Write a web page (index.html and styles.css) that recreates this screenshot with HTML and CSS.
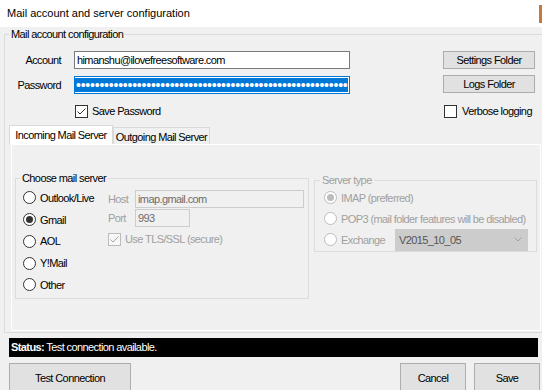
FILE: index.html
```html
<!DOCTYPE html>
<html>
<head>
<meta charset="utf-8">
<title>Mail account and server configuration</title>
<link rel="stylesheet" href="styles.css">
</head>
<body>
<div class="titlebar"><span class="title">Mail account and server configuration</span><span class="edge"></span></div>

<fieldset class="group outer">
  <legend>Mail account configuration</legend>
  <div class="top">
    <div class="form">
      <span class="lbl">Account</span>
      <div class="textbox">himanshu@ilovefreesoftware.com</div>
      <span class="lbl">Password</span>
      <div class="textbox focus"><span class="sel">••••••••••••••••••••••••••••••••••••••••••••••••••••••••••</span></div>
      <div class="check save">
        <svg width="13" height="13" viewBox="0 0 13 13"><rect x=".5" y=".5" width="12" height="12" fill="#fff" stroke="#333"/><path d="M2.5 6.5l2.5 2.5 5.5-5.5" fill="none" stroke="#333"/></svg>
        <span>Save Password</span>
      </div>
    </div>
    <div class="side">
      <button class="btn">Settings Folder</button>
      <button class="btn">Logs Folder</button>
      <div class="check verbose">
        <svg width="13" height="13" viewBox="0 0 13 13"><rect x=".5" y=".5" width="12" height="12" fill="#fff" stroke="#333"/></svg>
        <span>Verbose logging</span>
      </div>
    </div>
  </div>

  <div class="tabs">
    <div class="tabstrip">
      <div class="tab active">Incoming Mail Server</div>
      <div class="tab">Outgoing Mail Server</div>
    </div>
    <div class="panel">
      <fieldset class="group choose">
        <legend>Choose mail server</legend>
        <div class="choose-body">
          <div class="radios">
            <div class="radio-row"><span class="radio"></span><span>Outlook/Live</span></div>
            <div class="radio-row"><span class="radio on"></span><span>Gmail</span></div>
            <div class="radio-row"><span class="radio"></span><span>AOL</span></div>
            <div class="radio-row"><span class="radio"></span><span>Y!Mail</span></div>
            <div class="radio-row"><span class="radio"></span><span>Other</span></div>
          </div>
          <div class="fields">
            <div class="field-row"><span class="flabel">Host</span><div class="textbox dis host">imap.gmail.com</div></div>
            <div class="field-row"><span class="flabel">Port</span><div class="textbox dis port">993</div></div>
            <div class="check tls">
              <svg width="13" height="13" viewBox="0 0 13 13"><rect x=".5" y=".5" width="12" height="12" fill="#f7f7f7" stroke="#bcbcbc"/><path d="M2.5 6.5l2.5 2.5 5.5-5.5" fill="none" stroke="#a8a8a8"/></svg>
              <span class="dtext">Use TLS/SSL (secure)</span>
            </div>
          </div>
        </div>
      </fieldset>

      <fieldset class="group server">
        <legend>Server type</legend>
        <div class="server-body">
          <div class="radio-row srow"><span class="radio dis on"></span><span>IMAP (preferred)</span></div>
          <div class="radio-row srow"><span class="radio dis"></span><span>POP3 (mail folder features will be disabled)</span></div>
          <div class="radio-row srow"><span class="radio dis"></span><span class="exlabel">Exchange</span>
            <div class="combo"><span>V2015_10_05</span><svg width="8" height="5" viewBox="0 0 8 5"><path d="M.5 .5l3.5 3.5 3.5-3.5" fill="none" stroke="#a0a0a0"/></svg></div>
          </div>
        </div>
      </fieldset>
    </div>
  </div>
</fieldset>

<div class="status"><b>Status:</b> Test connection available.</div>

<div class="actions">
  <button class="btn big test">Test Connection</button>
  <div class="right">
    <button class="btn big small">Cancel</button>
    <button class="btn big small">Save</button>
  </div>
</div>
</body>
</html>
```

FILE: styles.css
```css
* { box-sizing: border-box; }
html, body { margin: 0; padding: 0; }
body {
  width: 542px;
  height: 390px;
  overflow: hidden;
  background: #f0f0f0;
  font: 11px "Liberation Sans", Arial, sans-serif;
  letter-spacing: -0.6px;
  color: #000;
}

.titlebar {
  height: 27px;
  background: #fff;
  display: flex;
  justify-content: space-between;
  align-items: flex-start;
  padding-left: 7px;
}
.title { line-height: 27px; letter-spacing: 0; }
.edge { width: 3px; height: 18px; margin-top: 5px; background: #c47a3c; }

.group {
  margin: 0;
  padding: 0;
  border: 1px solid #dcdcdc;
  min-width: 0;
}
.group > legend {
  padding: 0 2px;
  line-height: 14px;
  height: 14px;
}
.outer { width: 560px; margin-left: 4px; padding-bottom: 1px; }
.outer > legend { margin-left: 4px; }

.top { display: flex; padding-top: 10px; }
.form {
  display: grid;
  grid-template-columns: 56px 276px;
  grid-template-rows: 18px 18px auto;
  column-gap: 13px;
  row-gap: 7px;
  align-items: center;
}
.lbl { text-align: right; }

.textbox {
  height: 18px;
  border: 1px solid #7a7a7a;
  background: #fff;
  padding: 0 2px;
  line-height: 16px;
  white-space: nowrap;
  overflow: hidden;
}
.textbox.focus { border-color: #0078d7; padding: 1px 1px 1px 0; }
.sel {
  display: block;
  background: #0078d7;
  color: #fff;
  height: 14px;
  line-height: 14px;
  font-size: 14px;
  letter-spacing: -0.22px;
  overflow: hidden;
  padding-left: 1px;
}
.textbox.dis { background: #f0f0f0; border-color: #cccccc; color: #6d6d6d; }

.check { display: flex; align-items: center; gap: 4px; height: 13px; line-height: 13px; }
.check svg { flex: none; display: block; }
.save { grid-column: 2; margin-top: 3px; margin-left: 1px; }

.side { margin-left: 93px; display: flex; flex-direction: column; }
.btn {
  font: inherit;
  letter-spacing: inherit;
  color: #000;
  background: #e1e1e1;
  border: 1px solid #adadad;
  padding: 0;
  margin: 0;
  text-align: center;
}
.side .btn { width: 92px; height: 18px; line-height: 16px; }
.side .btn + .btn { margin-top: 6px; }
.verbose { margin-top: 12px; margin-left: 1px; gap: 5px; }

.tabs { margin-top: 7px; }
.tabstrip { display: flex; align-items: flex-end; height: 19px; margin-left: 4px; }
.tab {
  height: 17px;
  width: 97px;
  padding-top: 2px;
  border: 1px solid #d9d9d9;
  border-bottom: none;
  background: #f0f0f0;
  line-height: 14px;
  text-align: center;
  white-space: nowrap;
}
.tab.active { height: 19px; width: 104px; background: #fff; }

.panel {
  margin-left: 6px;
  width: 530px;
  height: 187px;
  border: 1px solid #fff;
  display: flex;
  align-items: flex-start;
}

.choose { width: 294px; margin: 26px 0 0 3px; padding-bottom: 2px; }
.choose > legend { margin-left: 4px; }
.choose-body { display: grid; grid-template-columns: 85px 1fr; padding-left: 7px; }
.radios { padding-top: 2px; }
.radio-row { height: 21.75px; display: flex; align-items: center; gap: 4px; white-space: nowrap; }
.radio {
  width: 13px;
  height: 13px;
  flex: none;
  border: 1px solid #333;
  border-radius: 50%;
  background: #fff;
  display: flex;
  align-items: center;
  justify-content: center;
}
.radio.on::after { content: ""; width: 7px; height: 7px; border-radius: 50%; background: #333; }
.radio.dis { border-color: #bcbcbc; }
.radio.dis.on::after { background: #bcbcbc; }

.fields { padding-top: 5px; }
.field-row { display: flex; align-items: center; height: 18px; }
.field-row + .field-row { margin-top: 1px; }
.flabel { width: 27px; color: #a0a0a0; }
.host { width: 169px; }
.port { width: 55px; }
.tls { margin-top: 6px; }
.dtext { color: #a0a0a0; }

.server { width: 223px; margin: 28px 0 0 5px; color: #a0a0a0; }
.server > legend { margin-left: 5px; }
.server-body { padding: 0 0 1px 9px; }
.srow { height: 21px; }
.exlabel { width: 50px; flex: none; }
.combo {
  width: 133px;
  height: 22px;
  flex: none;
  background: #cccccc;
  border: 1px solid #cccccc;
  color: #555;
  display: flex;
  align-items: center;
  justify-content: space-between;
  padding: 0 5px 0 3px;
}
.combo svg { display: block; }

.status {
  margin: 5px 0 0 9px;
  width: 529px;
  height: 19px;
  background: #000;
  color: #fff;
  line-height: 19px;
  padding-left: 2px;
  white-space: nowrap;
}

.actions {
  margin-top: 6px;
  display: flex;
  justify-content: space-between;
  padding: 0 2px 0 9px;
}
.btn.big { height: 30px; line-height: 28px; }
.test { width: 122px; }
.right { display: flex; gap: 8px; }
.small { width: 66px; }
```
